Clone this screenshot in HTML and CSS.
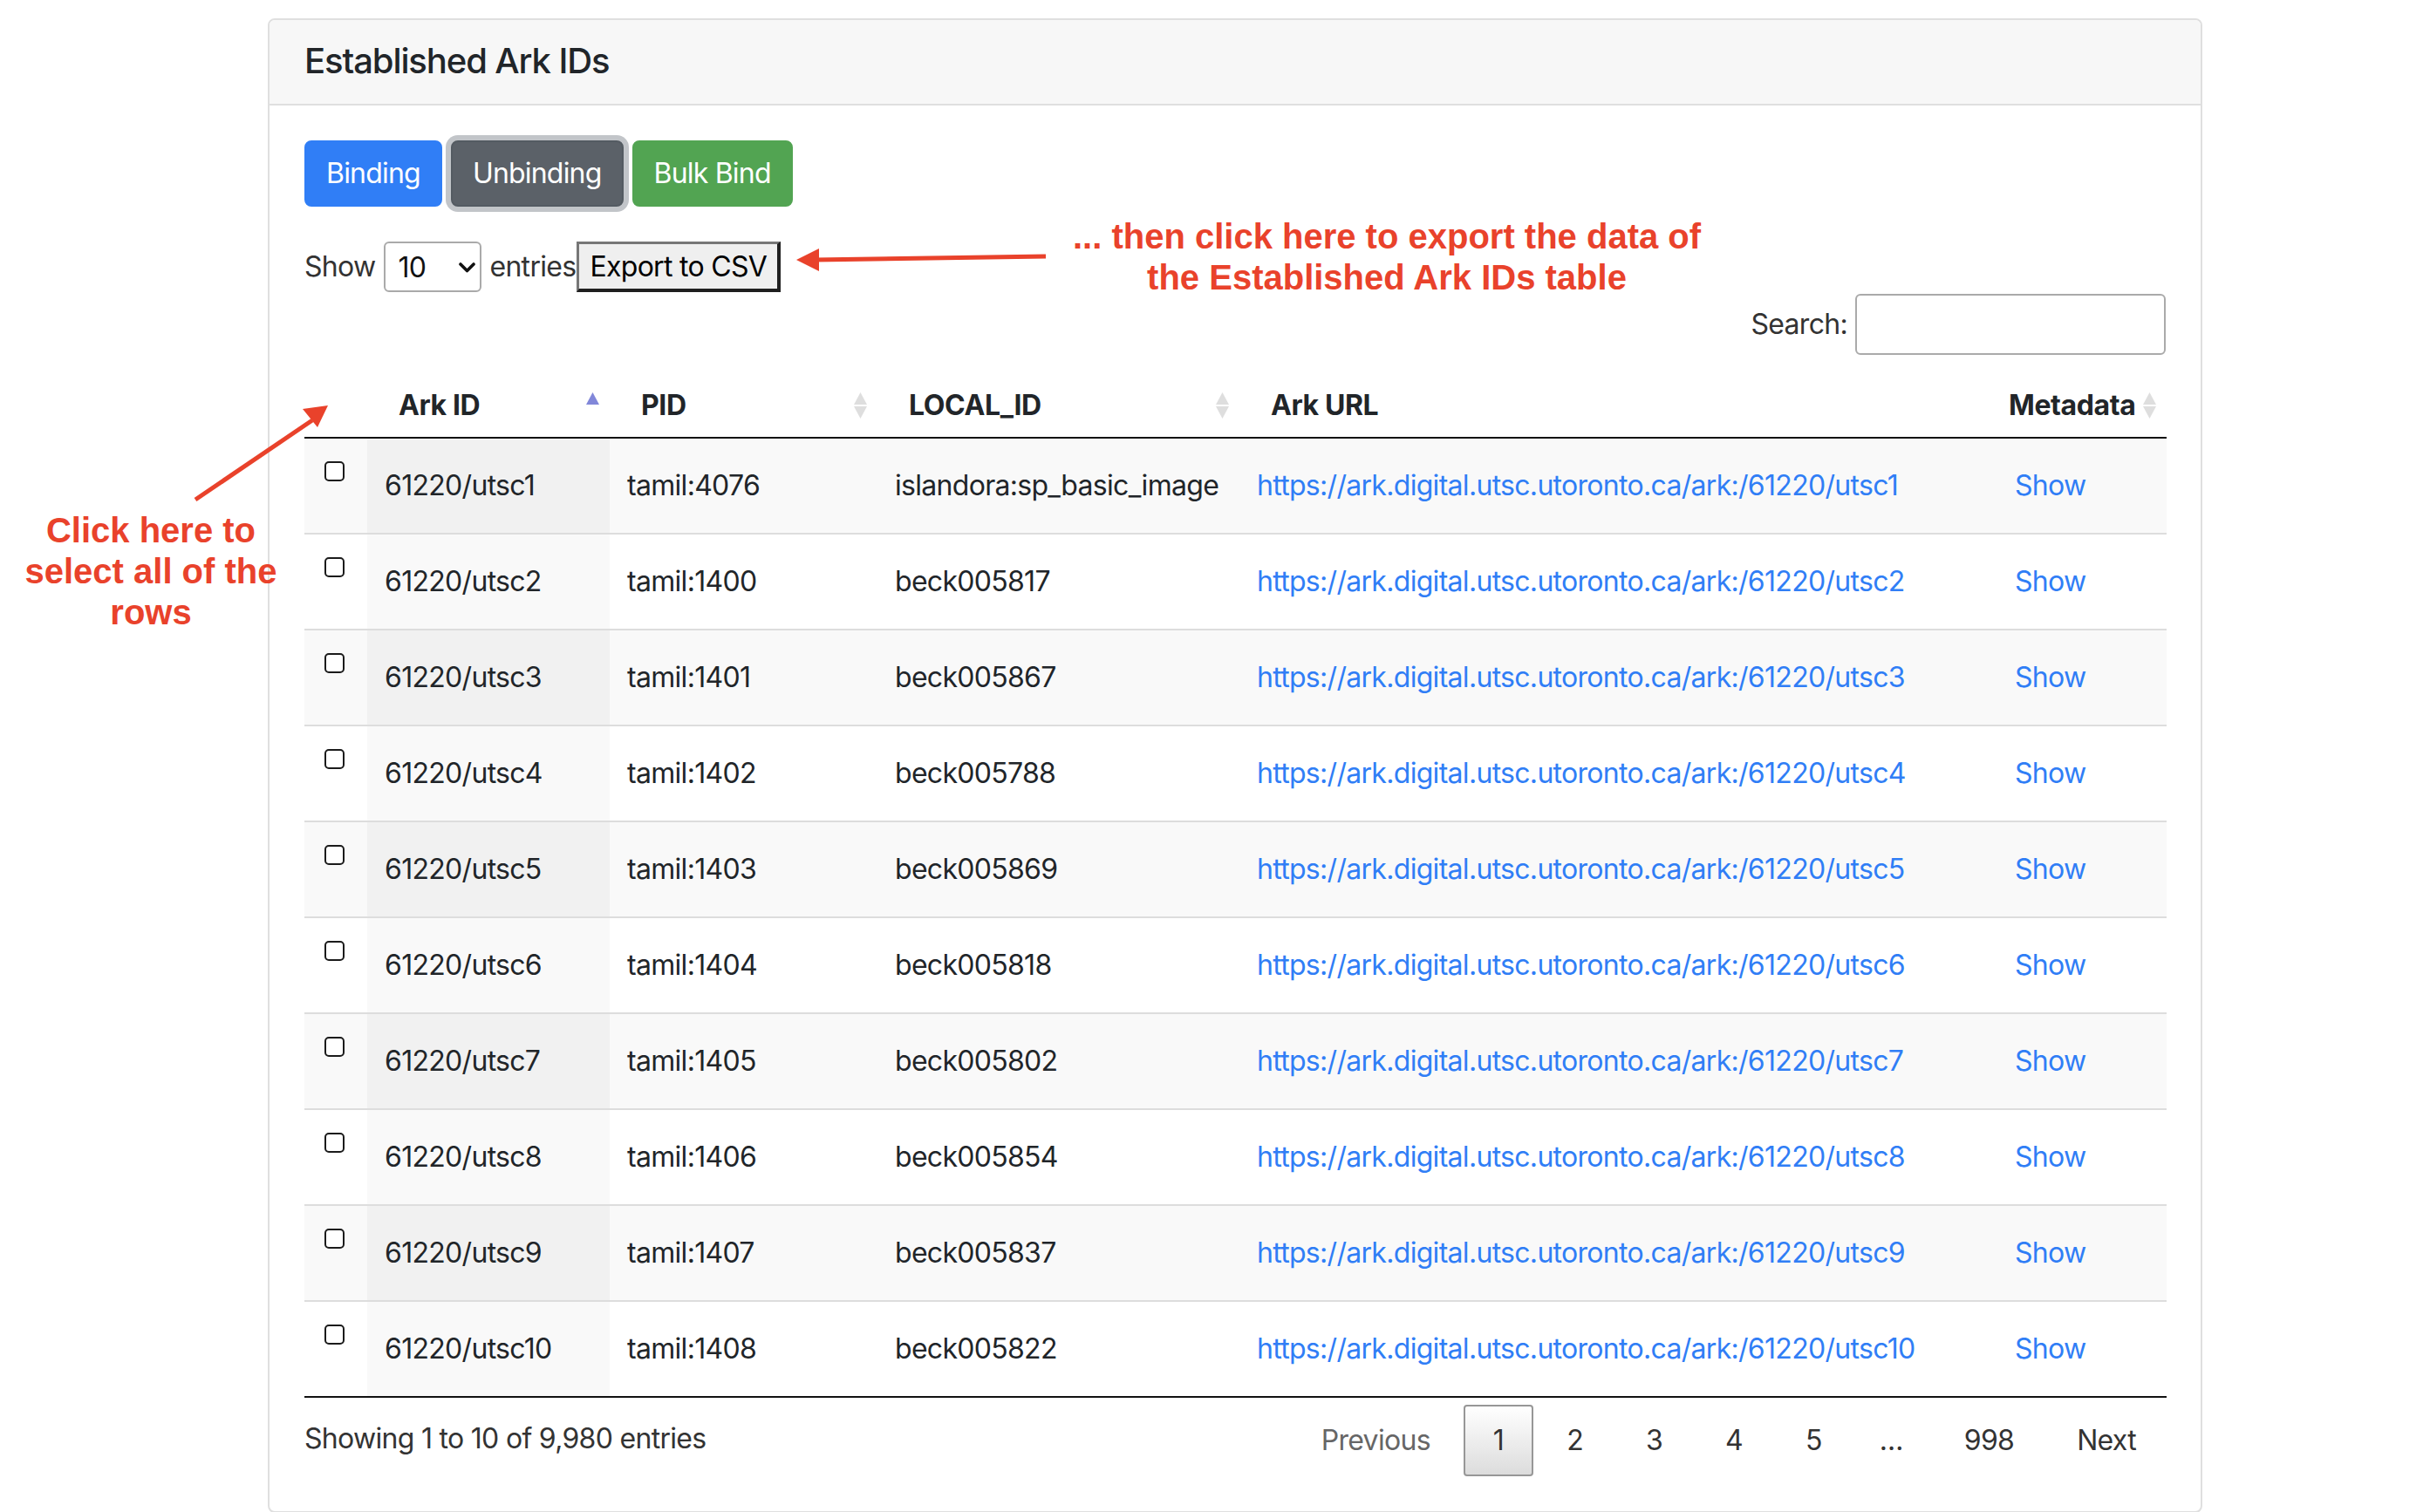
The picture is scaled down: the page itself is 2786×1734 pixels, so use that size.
FILE: index.html
```html
<!DOCTYPE html>
<html lang="en">
<head>
<meta charset="utf-8">
<title>Established Ark IDs</title>
<link rel="stylesheet" href="styles.css">
</head>
<body>
<div class="page">
  <section class="card">
    <div class="card-header"><h5 class="card-title">Established Ark IDs</h5></div>
    <div class="card-body">
      <div class="btn-row">
        <button class="btn btn-primary">Binding</button>
        <button class="btn btn-secondary">Unbinding</button>
        <button class="btn btn-success">Bulk Bind</button>
      </div>
      <div class="dt-length">
        <span>Show</span>
        <span class="select-wrap">
          <select class="len-select"><option>10</option><option>25</option><option>50</option><option>100</option></select>
          <svg class="chev" viewBox="0 0 19 12" width="19" height="12"><polyline points="2,2 9.5,9.5 17,2" fill="none" stroke="#111" stroke-width="3.6" stroke-linecap="round" stroke-linejoin="round"/></svg>
        </span>
        <span>entries</span><button class="export">Export to CSV</button>
      </div>
      <div class="dt-filter"><label class="filter-label">Search:<input class="filter-input" type="search"></label></div>
      <table class="dt">
        <colgroup>
          <col class="c-check"><col class="c-ark"><col class="c-pid"><col class="c-local"><col class="c-url"><col class="c-meta">
        </colgroup>
        <thead>
          <tr>
            <th></th>
            <th><div class="th-in"><span>Ark ID</span><svg class="sort" viewBox="0 0 17 30" width="17" height="30"><path d="M8.5 0 L16 14 H1 Z" fill="#8187d9"/></svg></div></th>
            <th><div class="th-in"><span>PID</span><svg class="sort" viewBox="0 0 17 30" width="17" height="30"><path d="M8.5 0 L16 14 H1 Z" fill="#dedede"/><path d="M1 16 H16 L8.5 30 Z" fill="#dedede"/></svg></div></th>
            <th><div class="th-in"><span>LOCAL_ID</span><svg class="sort" viewBox="0 0 17 30" width="17" height="30"><path d="M8.5 0 L16 14 H1 Z" fill="#dedede"/><path d="M1 16 H16 L8.5 30 Z" fill="#dedede"/></svg></div></th>
            <th><div class="th-in"><span>Ark URL</span></div></th>
            <th><div class="th-in"><span>Metadata</span><svg class="sort" viewBox="0 0 17 30" width="17" height="30"><path d="M8.5 0 L16 14 H1 Z" fill="#dedede"/><path d="M1 16 H16 L8.5 30 Z" fill="#dedede"/></svg></div></th>
          </tr>
        </thead>
        <tbody>
          <tr class="odd"><td class="td-check"><input type="checkbox" class="cb"></td><td class="sorted">61220/utsc1</td><td>tamil:4076</td><td>islandora:sp_basic_image</td><td><a class="link" href="#">https://ark.digital.utsc.utoronto.ca/ark:/61220/utsc1</a></td><td><a class="show-btn" href="#">Show</a></td></tr>
          <tr class="even"><td class="td-check"><input type="checkbox" class="cb"></td><td class="sorted">61220/utsc2</td><td>tamil:1400</td><td>beck005817</td><td><a class="link" href="#">https://ark.digital.utsc.utoronto.ca/ark:/61220/utsc2</a></td><td><a class="show-btn" href="#">Show</a></td></tr>
          <tr class="odd"><td class="td-check"><input type="checkbox" class="cb"></td><td class="sorted">61220/utsc3</td><td>tamil:1401</td><td>beck005867</td><td><a class="link" href="#">https://ark.digital.utsc.utoronto.ca/ark:/61220/utsc3</a></td><td><a class="show-btn" href="#">Show</a></td></tr>
          <tr class="even"><td class="td-check"><input type="checkbox" class="cb"></td><td class="sorted">61220/utsc4</td><td>tamil:1402</td><td>beck005788</td><td><a class="link" href="#">https://ark.digital.utsc.utoronto.ca/ark:/61220/utsc4</a></td><td><a class="show-btn" href="#">Show</a></td></tr>
          <tr class="odd"><td class="td-check"><input type="checkbox" class="cb"></td><td class="sorted">61220/utsc5</td><td>tamil:1403</td><td>beck005869</td><td><a class="link" href="#">https://ark.digital.utsc.utoronto.ca/ark:/61220/utsc5</a></td><td><a class="show-btn" href="#">Show</a></td></tr>
          <tr class="even"><td class="td-check"><input type="checkbox" class="cb"></td><td class="sorted">61220/utsc6</td><td>tamil:1404</td><td>beck005818</td><td><a class="link" href="#">https://ark.digital.utsc.utoronto.ca/ark:/61220/utsc6</a></td><td><a class="show-btn" href="#">Show</a></td></tr>
          <tr class="odd"><td class="td-check"><input type="checkbox" class="cb"></td><td class="sorted">61220/utsc7</td><td>tamil:1405</td><td>beck005802</td><td><a class="link" href="#">https://ark.digital.utsc.utoronto.ca/ark:/61220/utsc7</a></td><td><a class="show-btn" href="#">Show</a></td></tr>
          <tr class="even"><td class="td-check"><input type="checkbox" class="cb"></td><td class="sorted">61220/utsc8</td><td>tamil:1406</td><td>beck005854</td><td><a class="link" href="#">https://ark.digital.utsc.utoronto.ca/ark:/61220/utsc8</a></td><td><a class="show-btn" href="#">Show</a></td></tr>
          <tr class="odd"><td class="td-check"><input type="checkbox" class="cb"></td><td class="sorted">61220/utsc9</td><td>tamil:1407</td><td>beck005837</td><td><a class="link" href="#">https://ark.digital.utsc.utoronto.ca/ark:/61220/utsc9</a></td><td><a class="show-btn" href="#">Show</a></td></tr>
          <tr class="even"><td class="td-check"><input type="checkbox" class="cb"></td><td class="sorted">61220/utsc10</td><td>tamil:1408</td><td>beck005822</td><td><a class="link" href="#">https://ark.digital.utsc.utoronto.ca/ark:/61220/utsc10</a></td><td><a class="show-btn" href="#">Show</a></td></tr>
        </tbody>
      </table>
      <div class="dt-footer">
        <div class="dt-info">Showing 1 to 10 of 9,980 entries</div>
        <div class="dt-paginate">
          <a class="pg disabled">Previous</a>
          <a class="pg current">1</a>
          <a class="pg">2</a>
          <a class="pg">3</a>
          <a class="pg">4</a>
          <a class="pg">5</a>
          <span class="ellipsis">…</span>
          <a class="pg">998</a>
          <a class="pg">Next</a>
        </div>
      </div>
    </div>
  </section>

  <div class="note note-export">... then click here to export the data of<br>the Established Ark IDs table</div>
  <div class="note note-select">Click here to<br>select all of the<br>rows</div>

  <svg class="arrows" viewBox="0 0 2786 1734" width="2786" height="1734">
    <line x1="1199" y1="294" x2="934" y2="298" stroke="#e9422b" stroke-width="5"/>
    <polygon points="913,298 939,285 939,311" fill="#e9422b"/>
    <line x1="224" y1="573" x2="358" y2="482" stroke="#e9422b" stroke-width="5"/>
    <polygon points="376,465 347,469 364,490" fill="#e9422b"/>
  </svg>
</div>
</body>
</html>
```

FILE: styles.css
```css
* { box-sizing: border-box; }

html, body {
  margin: 0;
  padding: 0;
  background: #ffffff;
}

body {
  font-family: Inter, "Noto Sans", "Liberation Sans", sans-serif;
  font-size: 32px;
  line-height: 48px;
  letter-spacing: -0.7px;
  color: #212529;
}

.page {
  position: relative;
  width: 2786px;
  height: 1734px;
  overflow: hidden;
  padding: 21px 0 0 307px;
}

/* Card */
.card {
  width: 2218px;
  border: 2px solid #dfdfdf;
  border-radius: 8px;
  background: #fff;
}

.card-header {
  background: #f7f7f7;
  padding: 23px 40px 25px;
  border-bottom: 2px solid #dfdfdf;
  border-radius: 6px 6px 0 0;
}

.card-title {
  margin: 0;
  font-size: 40px;
  line-height: 48px;
  font-weight: 500;
  color: #212529;
  letter-spacing: -1.1px;
}

.card-body {
  padding: 40px;
}

/* Buttons */
.btn-row {
  display: flex;
  gap: 10px;
}

.btn {
  font-family: inherit;
  font-size: 32px;
  line-height: 48px;
  letter-spacing: -0.8px;
  padding: 12px 23px;
  border: 2px solid transparent;
  border-radius: 8px;
  color: #fff;
  cursor: pointer;
}

.btn-primary { background: #307ef6; border-color: #307ef6; }
.btn-secondary { background: #5b6168; border-color: #545b62; box-shadow: 0 0 0 6px #c2c5c9; }
.btn-success { background: #52a452; border-color: #52a452; }

/* Length row */
.dt-length {
  display: flex;
  align-items: center;
  margin-top: 40px;
  height: 58px;
  color: #333;
  line-height: 46px;
}

.select-wrap {
  position: relative;
  display: inline-flex;
  margin: 0 9px 0 10px;
}

.len-select {
  appearance: none;
  -webkit-appearance: none;
  width: 112px;
  height: 58px;
  border: 2px solid #aaa;
  border-radius: 6px;
  background: #fff;
  font-family: inherit;
  font-size: 32px;
  letter-spacing: -0.7px;
  color: #111;
  padding: 0 0 0 14px;
}

.chev {
  position: absolute;
  right: 7px;
  top: 24px;
  pointer-events: none;
}

.export {
  height: 58px;
  margin-left: 1px;
  padding: 0 12px;
  font-family: inherit;
  font-size: 32px;
  letter-spacing: -0.7px;
  color: #000;
  background: #efefef;
  border-style: solid;
  border-width: 3px 4px 4px 3px;
  border-color: #777 #1f1f1f #1f1f1f #777;
}

/* Filter */
.dt-filter {
  display: flex;
  justify-content: flex-end;
  margin-top: 2px;
  color: #333;
}

.filter-label {
  display: flex;
  align-items: center;
}

.filter-input {
  width: 356px;
  height: 70px;
  margin-left: 9px;
  border: 2px solid #aaa;
  border-radius: 6px;
  background: transparent;
  font: inherit;
}

/* Table */
.dt {
  width: 100%;
  margin-top: 7px;
  border-collapse: separate;
  border-spacing: 0;
  table-layout: fixed;
  border-bottom: 2px solid #111;
}

.c-check { width: 72px; }
.c-ark { width: 278px; }
.c-pid { width: 307px; }
.c-local { width: 415px; }
.c-url { width: 846px; }
.c-meta { width: 217px; }

.dt th {
  padding: 27px 11px 12px 36px;
  border-bottom: 2px solid #111;
  text-align: left;
  font-weight: 700;
  letter-spacing: -0.4px;
  color: #212529;
}

.th-in {
  display: flex;
  align-items: center;
  justify-content: space-between;
  gap: 8px;
  white-space: nowrap;
}

.sort { flex: none; }

.dt td {
  padding: 16px 20px;
  vertical-align: middle;
  white-space: nowrap;
  color: #212529;
}

.dt tbody tr + tr td {
  border-top: 2px solid #ddd;
}

.dt tr.odd td { background: #f9f9f9; }
.dt tr.odd td.sorted { background: #f1f1f1; }
.dt tr.even td { background: #fff; }
.dt tr.even td.sorted { background: #f9f9f9; }

.dt td.td-check {
  vertical-align: top;
}

.cb {
  appearance: none;
  -webkit-appearance: none;
  display: block;
  width: 23px;
  height: 23px;
  margin: 10px 0 0 3px;
  border: 2px solid #1b1b1b;
  border-radius: 5px;
  background: #fff;
}

.link {
  color: #307ef6;
  text-decoration: none;
}

.show-btn {
  display: inline-block;
  padding: 12px 21px;
  border: 2px solid transparent;
  line-height: 48px;
  color: #307ef6;
  text-decoration: none;
}

/* Footer */
.dt-footer {
  display: flex;
  justify-content: space-between;
  align-items: flex-start;
  color: #333;
}

.dt-info {
  padding-top: 24px;
  line-height: 46px;
}

.dt-paginate {
  display: flex;
  align-items: center;
  padding-top: 8px;
}

.pg {
  display: block;
  margin-left: 4px;
  padding: 16px 32px;
  border: 2px solid transparent;
  border-radius: 4px;
  line-height: 46px;
  color: #333;
}

.pg.disabled { color: #666; }

.pg.current {
  border-color: #979797;
  background: linear-gradient(to bottom, #ffffff 0%, #dcdcdc 100%);
}

.ellipsis {
  padding: 0 32px;
  line-height: 46px;
  color: #333;
}

/* Annotations */
.note {
  position: absolute;
  font-family: "Liberation Sans", Arial, sans-serif;
  font-weight: 700;
  font-size: 40px;
  line-height: 47px;
  letter-spacing: 0;
  color: #e9422b;
  text-align: center;
  white-space: nowrap;
}

.note-export {
  left: 1140px;
  width: 900px;
  top: 248px;
}

.note-select {
  left: 13px;
  width: 320px;
  top: 585px;
}

.arrows {
  position: absolute;
  left: 0;
  top: 0;
  pointer-events: none;
}
```
